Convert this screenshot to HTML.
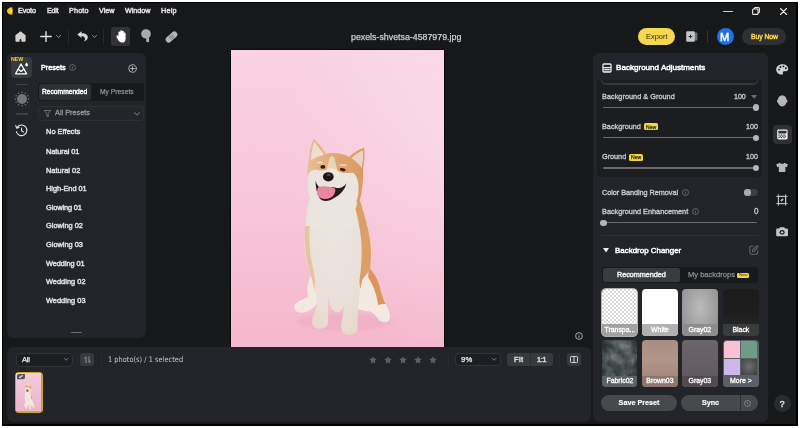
<!DOCTYPE html>
<html lang="en">
<head>
<meta charset="utf-8">
<title>Evoto</title>
<style>
*{box-sizing:border-box;margin:0;padding:0}
html,body{width:800px;height:428px;overflow:hidden;background:#fff}
body{font-family:"Liberation Sans",sans-serif;color:#e4e5e7;position:relative;-webkit-font-smoothing:antialiased}
.abs,.t,.tb{position:absolute}
.t,.tb{will-change:transform;white-space:nowrap;line-height:12px;height:12px;font-size:7.6px;color:#dcdde0}
.tb{-webkit-text-stroke:0.5px currentColor}
.win{position:absolute;left:2px;top:2px;width:796px;height:423.5px;background:#17181a;border:1px solid #000;border-right-width:2px;border-bottom-width:2px}
.panel{position:absolute;background:#232429;border-radius:6px}
svg{position:absolute;overflow:visible}
</style>
</head>
<body>
<div class="win"></div>

<!-- ===== menu bar ===== -->
<svg style="left:7px;top:7px" width="6" height="8" viewBox="0 0 6 8"><path d="M5.4 0.2 C2 0.2 0 2 0 4 C0 6 2 7.8 5.4 7.8 Z" fill="#f6c21a"/><path d="M5.4 2.2 C4 2.6 3.4 3.2 3.4 4 C3.4 4.8 4 5.4 5.4 5.8 Z" fill="#fde68a"/></svg>
<div class="tb" id="m1" style="transform:scaleY(1.12);left:18px;top:5.2px;font-size:7.2px;letter-spacing:-0.1px">Evoto</div>
<div class="tb" id="m2" style="transform:scaleY(1.12);left:47px;top:5.2px;font-size:7.2px;letter-spacing:-0.3px">Edit</div>
<div class="tb" id="m3" style="transform:scaleY(1.12);left:69px;top:5.2px;font-size:7.2px;letter-spacing:0.18px">Photo</div>
<div class="tb" id="m4" style="transform:scaleY(1.12);left:99px;top:5.2px;font-size:7.2px;letter-spacing:0.02px">View</div>
<div class="tb" id="m5" style="transform:scaleY(1.12);left:125px;top:5.2px;font-size:7.2px;letter-spacing:-0.02px">Window</div>
<div class="tb" id="m6" style="transform:scaleY(1.12);left:161px;top:5.2px;font-size:7.2px;letter-spacing:0.23px">Help</div>

<!-- window controls -->
<div class="abs" style="left:723px;top:10.5px;width:10px;height:1.1px;background:#c9c9ca"></div>
<svg style="left:752px;top:7px" width="8" height="8" viewBox="0 0 8 8" fill="none" stroke="#e8e8e8" stroke-width="1.1"><rect x="0.6" y="2" width="5.4" height="5.4" rx="1"/><path d="M2.2 2 V1.6 Q2.2 0.6 3.2 0.6 H6.4 Q7.4 0.6 7.4 1.6 V4.8 Q7.4 5.8 6.4 5.8 H6"/></svg>
<svg style="left:780px;top:8px" width="7" height="7" viewBox="0 0 7 7" stroke="#e8e8e8" stroke-width="1.1" stroke-linecap="round"><path d="M0.5 0.5 L6.5 6.5 M6.5 0.5 L0.5 6.5"/></svg>


<!-- ===== toolbar ===== -->
<svg style="left:15px;top:31px" width="11" height="11" viewBox="0 0 11 11"><path d="M5.5 0.2 L10.6 4.2 V9.8 Q10.6 10.8 9.6 10.8 H6.4 V8.9 Q6.4 8.1 5.5 8.1 Q4.6 8.1 4.6 8.9 V10.8 H1.4 Q0.4 10.8 0.4 9.8 V4.2 Z" fill="#d2d2d3"/></svg>
<svg style="left:40px;top:31px" width="12" height="11" viewBox="0 0 12 11" stroke="#e2e2e3" stroke-width="1.4" stroke-linecap="round"><path d="M6 0.6 V10.4 M0.8 5.5 H11.2"/></svg>
<svg style="left:55.5px;top:35px" width="5" height="3" viewBox="0 0 5 3" fill="none" stroke="#9b9c9e" stroke-width="0.9" stroke-linecap="round" stroke-linejoin="round"><path d="M0.5 0.5 L2.5 2.4 L4.5 0.5"/></svg>
<div class="abs" style="left:68px;top:29px;width:1px;height:15px;background:#27292b"></div>
<svg style="left:76.5px;top:31px" width="11" height="11" viewBox="0 0 11 11"><path d="M4.6 0.3 L0.3 3.6 L4.6 6.9 V4.9 C6.6 4.9 8 6 8 8 C8 9 7.6 9.8 7 10.5 C9.4 9.9 10.8 8.2 10.8 6.3 C10.8 3.8 8.4 2.3 4.6 2.3 Z" fill="#d8d8d9"/></svg>
<svg style="left:92px;top:35px" width="5" height="3" viewBox="0 0 5 3" fill="none" stroke="#9b9c9e" stroke-width="0.9" stroke-linecap="round" stroke-linejoin="round"><path d="M0.5 0.5 L2.5 2.4 L4.5 0.5"/></svg>
<div class="abs" style="left:103px;top:29px;width:1px;height:15px;background:#27292b"></div>
<div class="abs" style="left:111px;top:27px;width:18.5px;height:19px;background:#303235;border-radius:2px"></div>
<svg style="left:115.6px;top:30.2px" width="10.3" height="12.8" viewBox="0 0 10.3 12.8"><path d="M2.4 7 V2.6 Q2.4 1.6 3.3 1.6 Q4.2 1.6 4.2 2.6 V1.2 Q4.2 0.2 5.1 0.2 Q6 0.2 6 1.2 V1.8 Q6 0.8 6.9 0.8 Q7.8 0.8 7.8 1.8 V3.2 Q7.8 2.4 8.7 2.4 Q9.6 2.4 9.6 3.4 V8.4 Q9.6 12.6 5.8 12.6 Q3.6 12.6 2.4 10.6 L0.5 7 Q0 6 0.8 5.5 Q1.6 5.1 2.1 5.9 Z" fill="#fff"/></svg>
<svg style="left:140.8px;top:29.1px" width="10" height="13.5" viewBox="0 0 10 13.5"><path d="M5 0.2 C8 0.2 9.8 2.3 9.8 4.8 C9.8 6.6 9.2 8 8 8.6 L8.2 11.4 Q8.3 13.3 6.7 13.3 Q5.1 13.3 5.2 11.4 L5.3 9.6 C4.6 9.6 4.2 9.2 3.8 9.2 C3 9.4 2.2 9 1.8 8.2 C0.7 7.4 0.2 6.2 0.2 4.8 C0.2 2.3 2 0.2 5 0.2 Z" fill="#a9aaab"/></svg>
<svg style="left:165px;top:30.5px" width="13" height="12" viewBox="0 0 13 12"><g transform="rotate(-42 6.5 6)"><rect x="-0.3" y="3" width="13.6" height="6" rx="3" fill="#b4b5b6"/><rect x="4.3" y="3.8" width="4.4" height="4.4" rx="0.6" fill="#8d8e90"/><circle cx="5.6" cy="5.1" r="0.45" fill="#c8c8c9"/><circle cx="7.4" cy="5.1" r="0.45" fill="#c8c8c9"/><circle cx="5.6" cy="6.9" r="0.45" fill="#c8c8c9"/><circle cx="7.4" cy="6.9" r="0.45" fill="#c8c8c9"/></g></svg>

<div class="t" id="title" style="left:350.6px;top:31.4px;-webkit-text-stroke:0.25px #c8c9cb;color:#d4d5d7;font-size:8.8px;letter-spacing:0.01px">pexels-shvetsa-4587979.jpg</div>

<!-- right toolbar -->
<div class="abs" style="left:637.5px;top:28px;width:37.5px;height:17px;border-radius:9px;background:#f6d84c"></div>
<div class="t" id="export" style="left:646px;top:30.5px;color:#2a2a22;font-size:7.4px;letter-spacing:0.03px">Export</div>
<svg style="left:686px;top:31px" width="12" height="11" viewBox="0 0 12 11"><path d="M8 1.5 H10.6 Q11.4 1.5 11.4 2.3 V8.7 Q11.4 9.5 10.6 9.5 H8 Z" fill="#6f7072"/><rect x="0.2" y="0.2" width="8.6" height="10.6" rx="1" fill="#c4c5c6"/><path d="M4.5 3.6 V7.4 M2.6 5.5 H6.4" stroke="#2a2b2d" stroke-width="1"/></svg>
<div class="abs" style="left:707px;top:30px;width:1px;height:13px;background:#303234"></div>
<div class="abs" style="left:716.5px;top:28.3px;width:17px;height:17px;border-radius:50%;background:#2170e8"></div>
<div class="tb" id="avatar" style="left:720.3px;top:30.7px;font-size:11px;color:#fff">M</div>
<div class="abs" style="left:741.5px;top:28px;width:44.5px;height:17px;border-radius:9px;background:#2d2f32"></div>
<div class="tb" id="buy" style="left:750.5px;top:30.5px;color:#f1cf48;font-size:6.8px;letter-spacing:-0.03px">Buy Now</div>


<!-- ===== left panel ===== -->
<div class="panel" style="left:6.5px;top:53px;width:139.5px;height:285px"></div>
<div class="abs" style="left:10.7px;top:57px;width:21.3px;height:21.4px;background:#38393c;border-radius:4px"></div>
<div class="tb" id="new0" style="left:10.5px;top:53.2px;color:#f2d230;font-weight:bold;-webkit-text-stroke:0;font-size:5.3px;letter-spacing:-0.03px">NEW</div>
<svg style="left:15px;top:61.5px" width="14" height="13" viewBox="0 0 14 13" fill="none" stroke="#fff" stroke-width="1.3" stroke-linejoin="round" stroke-linecap="round"><path d="M6 2 L11.6 11.8 H0.6 Z"/><path d="M3.3 7.2 L6 9.4 L8.8 7.2"/><path d="M11.6 0.6 C12.4 1.6 13 2.4 13 3.1 A1.4 1.4 0 0 1 10.2 3.1 C10.2 2.4 10.8 1.6 11.6 0.6 Z" fill="#fff" stroke="none"/></svg>
<div class="abs" style="left:16px;top:83.5px;width:11.5px;height:1.3px;background:#3d3f42"></div>
<svg style="left:13.6px;top:90.6px" width="16" height="16" viewBox="-8 -8 16 16"><circle r="5.1" fill="#727477"/><g fill="#727477"><circle cx="0" cy="-6.7" r="0.75"/><circle cx="3.35" cy="-5.8" r="0.75"/><circle cx="5.8" cy="-3.35" r="0.75"/><circle cx="6.7" cy="0" r="0.75"/><circle cx="5.8" cy="3.35" r="0.75"/><circle cx="3.35" cy="5.8" r="0.75"/><circle cx="0" cy="6.7" r="0.75"/><circle cx="-3.35" cy="5.8" r="0.75"/><circle cx="-5.8" cy="3.35" r="0.75"/><circle cx="-6.7" cy="0" r="0.75"/><circle cx="-5.8" cy="-3.35" r="0.75"/><circle cx="-3.35" cy="-5.8" r="0.75"/></g></svg>
<div class="abs" style="left:16px;top:113.4px;width:11.5px;height:1.3px;background:#3d3f42"></div>
<svg style="left:15px;top:124px" width="13" height="13" viewBox="0 0 13 13" fill="none" stroke="#e6e6e7" stroke-width="1.1" stroke-linecap="round" stroke-linejoin="round"><path d="M2.1 3.4 A5.3 5.3 0 1 1 1.4 7.6"/><path d="M0.8 1.6 L1.6 4.1 L4.1 3.5"/><path d="M6.6 4 V6.8 L8.6 7.9"/></svg>

<div class="tb" id="presets" style="left:41.3px;top:61.8px;color:#fff;-webkit-text-stroke:0.45px #fff;font-size:7.3px;letter-spacing:-0.01px">Presets</div>
<svg style="left:68.7px;top:64.3px" width="7" height="7" viewBox="0 0 7 7" fill="none" stroke="#7c7e81" stroke-width="0.7"><circle cx="3.5" cy="3.5" r="3"/><path d="M3.5 3.2 V5.2 M3.5 1.8 V2.4"/></svg>
<svg style="left:127.5px;top:63.5px" width="9" height="9" viewBox="0 0 9 9" fill="none" stroke="#cfd0d2" stroke-width="0.8" stroke-linecap="round"><circle cx="4.5" cy="4.5" r="3.8"/><path d="M4.5 2.6 V6.4 M2.6 4.5 H6.4"/></svg>

<div class="abs" style="left:38px;top:83.3px;width:106px;height:17.4px;background:#18191b;border-radius:3px"></div>
<div class="abs" style="left:39px;top:84.3px;width:51.5px;height:15.4px;background:#2e3033;border-radius:2.5px"></div>
<div class="tb" id="rec1" style="left:42px;top:86px;color:#fff;-webkit-text-stroke:0.4px #fff;font-size:6.7px;letter-spacing:-0.01px">Recommended</div>
<div class="tb" id="myp" style="left:100.3px;top:86px;color:#8b8d90;-webkit-text-stroke:0.25px #8b8d90;font-size:6.7px;letter-spacing:0.03px">My Presets</div>

<div class="abs" style="left:38px;top:105.5px;width:106px;height:15.3px;border:1px solid #2d2f32;border-radius:3px;background:#232528"></div>
<svg style="left:44.3px;top:109.5px" width="7" height="7.5" viewBox="0 0 7 7.5" fill="none" stroke="#808285" stroke-width="0.8" stroke-linejoin="round"><path d="M0.5 0.5 H6.5 L4.2 3.6 V6.9 L2.8 6 V3.6 Z"/></svg>
<div class="tb" id="allp" style="left:55px;top:107.2px;color:#94969a;-webkit-text-stroke:0.3px #94969a;font-size:7.3px;letter-spacing:0.01px">All Presets</div>
<svg style="left:134px;top:111.5px" width="6" height="4" viewBox="0 0 6 4" fill="none" stroke="#8b8d90" stroke-width="0.9" stroke-linecap="round" stroke-linejoin="round"><path d="M0.6 0.6 L3 3.2 L5.4 0.6"/></svg>
<div class="tb" id="li0" style="transform:scaleY(1.08);left:46px;top:125.5px;color:#d9dadc;font-size:7.4px;letter-spacing:0.04px">No Effects</div>
<div class="tb" id="li1" style="transform:scaleY(1.08);left:46px;top:146.0px;color:#d9dadc;font-size:7.4px;letter-spacing:-0.07px">Natural 01</div>
<div class="tb" id="li2" style="transform:scaleY(1.08);left:46px;top:164.5px;color:#d9dadc;font-size:7.4px;letter-spacing:0.02px">Natural 02</div>
<div class="tb" id="li3" style="transform:scaleY(1.08);left:46px;top:183.3px;color:#d9dadc;font-size:7.4px;letter-spacing:-0.04px">High-End 01</div>
<div class="tb" id="li4" style="transform:scaleY(1.08);left:46px;top:201.7px;color:#d9dadc;font-size:7.4px;letter-spacing:-0.11px">Glowing 01</div>
<div class="tb" id="li5" style="transform:scaleY(1.08);left:46px;top:220.4px;color:#d9dadc;font-size:7.4px;letter-spacing:0.0px">Glowing 02</div>
<div class="tb" id="li6" style="transform:scaleY(1.08);left:46px;top:239.0px;color:#d9dadc;font-size:7.4px;letter-spacing:0.0px">Glowing 03</div>
<div class="tb" id="li7" style="transform:scaleY(1.08);left:46px;top:257.6px;color:#d9dadc;font-size:7.4px;letter-spacing:-0.07px">Wedding 01</div>
<div class="tb" id="li8" style="transform:scaleY(1.08);left:46px;top:276.2px;color:#d9dadc;font-size:7.4px;letter-spacing:0.02px">Wedding 02</div>
<div class="tb" id="li9" style="transform:scaleY(1.08);left:46px;top:294.6px;color:#d9dadc;font-size:7.4px;letter-spacing:0.02px">Wedding 03</div>

<div class="abs" style="left:71px;top:332px;width:10.5px;height:1.3px;background:#6d6f72;border-radius:1px"></div>


<!-- ===== canvas photo ===== -->
<div class="abs" style="left:230.3px;top:49.3px;width:214.4px;height:299px;background:#0a0a0b"></div>
<svg style="left:231px;top:50px" width="213" height="297.5" viewBox="231 50 213 297.5">
<defs>
<linearGradient id="pk" x1="0" y1="0" x2="0" y2="1"><stop offset="0" stop-color="#f9d2e2"/><stop offset="0.5" stop-color="#f8c6da"/><stop offset="1" stop-color="#f5b8cd"/></linearGradient>
<radialGradient id="pk2" cx="1" cy="0.3" r="0.75"><stop offset="0" stop-color="#fff" stop-opacity="0.24"/><stop offset="1" stop-color="#fff" stop-opacity="0"/></radialGradient>
<linearGradient id="bodyg" x1="0" y1="0" x2="1" y2="0"><stop offset="0" stop-color="#e9c7a3"/><stop offset="0.55" stop-color="#e0a46c"/><stop offset="1" stop-color="#d98f52"/></linearGradient>
<radialGradient id="chestg" cx="0.45" cy="0.3" r="0.8"><stop offset="0" stop-color="#ebe5df"/><stop offset="0.6" stop-color="#e9e1d9"/><stop offset="1" stop-color="#e7d7c7"/></radialGradient>
<filter id="bl" x="-10%" y="-10%" width="120%" height="120%"><feGaussianBlur stdDeviation="0.7"/></filter>
<filter id="bl2" x="-20%" y="-20%" width="140%" height="140%"><feGaussianBlur stdDeviation="1.6"/></filter>
<clipPath id="cp"><rect x="231" y="50" width="213" height="297.5"/></clipPath>
<linearGradient id="headg" x1="0" y1="0" x2="1" y2="0"><stop offset="0" stop-color="#e8c094"/><stop offset="0.45" stop-color="#e0a875"/><stop offset="1" stop-color="#da9a62"/></linearGradient>
</defs>
<rect x="231" y="50" width="213" height="297.5" fill="url(#pk)"/>
<rect x="231" y="50" width="213" height="297.5" fill="url(#pk2)"/>
<g clip-path="url(#cp)">
<!-- floor shadow -->
<ellipse cx="345" cy="322" rx="48" ry="9" fill="#e9a0bb" opacity="0.35" filter="url(#bl2)"/>
<g filter="url(#bl)">
<!-- haunch / back -->
<path d="M362 262 C368 266 374 274 378 286 C381 294 384 300 386 305 C389 310 391 316 389.5 320 C387 323.5 381 323 378 319 C375 314 372 311 366 311 L352 308 L352 270 Z" fill="#f3ebe3"/>
<path d="M369 268 C375 273 379 282 381 292 C382.5 297 384 301 385.5 304 C383 304 380 304 378 305 C377 296 374 286 368 277 Z" fill="#dc955a"/>
<!-- left hind paw & hip fluff -->
<path d="M311 276 C307 282 306.5 290 308.5 297 C303 299 296 302 294.3 306 C293.5 310.5 298 313.3 303 312.6 C309 311.6 314 308 317 304 L319 280 Z" fill="#f2e9e0"/>
<!-- torso -->
<path d="M309 200 C306.5 210 305 225 304.5 240 C304 252 306 262 309.5 271 C313 279 316 289 317 299 C317.3 307 314.5 313 312.5 318.5 C311.3 324 313 328 318 328.7 C323 329 327.5 327.5 328 323 C328.5 315 328 305 328.5 296 C329 302 330 308 334 311.5 C338 313.5 342 312 343.5 306 C344 312 342.5 318 341.5 323 C340.5 329 342 334 348 334.8 C353.5 335.2 357.5 333 357.5 328 C357.5 320 358 312 358.6 305 C359 296 360 286 362 278 C365 274 368 272 369.5 270 C371.5 262 371.5 250 370.5 241 C369 231 366.5 221 364 212 C362.5 206 361 200 359 194 Z" fill="url(#chestg)"/>
<!-- head -->
<path d="M313.6 138.8 C311 145 309.3 151 309.2 157 C308 163 307 171 307.2 179 C307.5 188 308.8 196 310 201 C314 208 322 212 332 212 C344 212 354 208 360 200 C362 192 363.5 180 363.2 168 C364.4 161 364.9 154 364.2 147.8 C359 149.6 353 152.6 349 157 C343 153 333 152 325.5 153.8 C322.5 148 318 142.5 313.6 138.8 Z" fill="url(#headg)"/>
<!-- ears inner -->
<path d="M314.2 142 C312.2 148 311 154 311 160 C314.5 158 320 155.8 324 154.8 C321 150 317.7 145.8 314.2 142 Z" fill="#f1ddd0"/>
<path d="M363 150.3 C358.5 152 354.2 155 351.5 158.5 C355.2 160.5 359 164 361.5 168 C363 162 363.5 156 363 150.3 Z" fill="#ecd3c6"/>
<!-- white face + neck -->
<path d="M307.6 176 C309 172 312 169.8 316 169.6 C320 170.8 324 171 326.5 169.5 C328 167.5 329.5 166 331.5 166 C333.5 166 335.5 168 338 171 C342 173.5 348 173.5 352.5 172.5 C355.5 174 357.5 178 358.2 183 C359 190 358.5 196 356.5 201 C357.5 208 358 216 356 226 C345 234 320 234 309 226 C307.5 218 308.5 208 310 201 C308 193 307 184 307.6 176 Z" fill="#ebe5df"/>
<path d="M327 169 C327.8 165 328.6 160.5 330 157 C331.5 155.8 333.5 156 334.5 158 C335.3 162 336.3 166.5 337.6 170.5 C334 168 330.5 167.5 327 169 Z" fill="#ecd3b6"/>
<path d="M316 163.2 C318 161.5 321.5 161.3 324 162.6 C322 163.4 318.5 163.8 316 163.2 Z" fill="#f0dcc4"/>
<path d="M338.5 165.3 C341 163.6 345 163.8 347.5 165.6 C345 166 341 166 338.5 165.3 Z" fill="#f0dcc4"/>
<!-- tan on right shoulder -->
<path d="M359 197 C362 206 365.5 218 368.2 230 C371 242 372 256 369.8 270 C367 274 364 277 362.3 280 C361.5 283 361 286 360.6 289 C359.6 286 359.3 283 359.6 279 C361 270 362 258 361.5 244 C360.5 230 358 218 355.5 209 Z" fill="#dd9f68"/>
<path d="M305 226 C304 242 305 256 309.5 271 C311.5 277 313.5 284 314.5 292 C315.5 284 315 276 313 268 C310 256 309 242 309.5 226 Z" fill="#e6ba8c" opacity="0.75"/>
<!-- eyes -->
<ellipse cx="322.8" cy="166.9" rx="2.5" ry="1.9" fill="#2a1c14" transform="rotate(-5 322.8 166.9)"/>
<ellipse cx="342.7" cy="169.7" rx="3" ry="1.5" fill="#2a1c14" transform="rotate(12 342.7 169.7)"/>
<!-- nose -->
<ellipse cx="328.3" cy="176.8" rx="5.4" ry="4.6" fill="#1d1512"/><ellipse cx="328.6" cy="175" rx="2.2" ry="0.9" fill="#6b6360" opacity="0.7"/>
<!-- mouth -->
<path d="M315.5 180.5 C317 186 320 189 325 187.5 C329 186.5 333 187 337 188 C341 188.5 345 186 346.5 183 C345 190 340 195 334 198 C329 202 322 202 319.5 198 C316.5 193 315.5 186 315.5 180.5 Z" fill="#2b1a17"/>
<path d="M318.5 187 C322 185.5 330 186 335 188.5 C336 192 334 196 330 198 C325 200 319.5 199 317.5 195 C316.5 192 317 189 318.5 187 Z" fill="#e8879d"/>
</g>
</g>
</svg>


<!-- ===== info icon on canvas ===== -->
<svg style="left:575px;top:332.3px" width="8" height="8" viewBox="0 0 8 8" fill="none" stroke="#c9cacc" stroke-width="0.8"><circle cx="4" cy="4" r="3.4"/><path d="M4 3.6 V5.8 M4 2.1 V2.8"/></svg>

<!-- ===== bottom panel ===== -->
<div class="panel" style="left:6.5px;top:347px;width:584px;height:74.5px"></div>
<div class="abs" style="left:16px;top:352.5px;width:56.5px;height:14px;border:1px solid #313337;border-radius:4px;background:#1d1e21"></div>
<div class="tb" id="all" style="left:22px;top:353.6px;color:#f0f0f1;letter-spacing:-0.3px;font-size:7.6px;-webkit-text-stroke:0.25px #f0f0f1">All</div>
<svg style="left:63.7px;top:358.2px" width="4.4" height="2.8" viewBox="0 0 5 3.2" fill="none" stroke="#8d8f92" stroke-width="0.9" stroke-linecap="round" stroke-linejoin="round"><path d="M0.5 0.5 L2.5 2.6 L4.5 0.5"/></svg>
<div class="abs" style="left:80px;top:353px;width:14.2px;height:13.3px;border-radius:3px;background:#37393c"></div>
<svg style="left:83.5px;top:356px" width="7" height="7.4" viewBox="0 0 7 7.4" fill="none" stroke="#b9babc" stroke-width="0.7" stroke-linecap="round" stroke-linejoin="round"><path d="M2 6.6 V0.8 L0.6 2.2"/><path d="M5 0.8 V6.6 L6.4 5.2"/></svg>
<div class="abs" style="left:101px;top:354px;width:1px;height:12px;background:#282a2e"></div>
<div class="t" id="cnt" style="transform:scaleY(1.15);left:108px;top:353.8px;font-family:'DejaVu Sans','Liberation Sans',sans-serif;color:#c6c7c9;font-size:6.6px;letter-spacing:0.03px">1 photo(s) / 1 selected</div>
<svg style="left:368.5px;top:355.6px" width="8" height="8" viewBox="0 0 8 8"><path d="M4 0.2 L5.18 2.6 L7.8 2.98 L5.9 4.84 L6.35 7.46 L4 6.22 L1.65 7.46 L2.1 4.84 L0.2 2.98 L2.82 2.6 Z" fill="#5d5f62"/></svg>
<svg style="left:383.8px;top:355.6px" width="8" height="8" viewBox="0 0 8 8"><path d="M4 0.2 L5.18 2.6 L7.8 2.98 L5.9 4.84 L6.35 7.46 L4 6.22 L1.65 7.46 L2.1 4.84 L0.2 2.98 L2.82 2.6 Z" fill="#5d5f62"/></svg>
<svg style="left:399.0px;top:355.6px" width="8" height="8" viewBox="0 0 8 8"><path d="M4 0.2 L5.18 2.6 L7.8 2.98 L5.9 4.84 L6.35 7.46 L4 6.22 L1.65 7.46 L2.1 4.84 L0.2 2.98 L2.82 2.6 Z" fill="#5d5f62"/></svg>
<svg style="left:414.0px;top:355.6px" width="8" height="8" viewBox="0 0 8 8"><path d="M4 0.2 L5.18 2.6 L7.8 2.98 L5.9 4.84 L6.35 7.46 L4 6.22 L1.65 7.46 L2.1 4.84 L0.2 2.98 L2.82 2.6 Z" fill="#5d5f62"/></svg>
<svg style="left:429.0px;top:355.6px" width="8" height="8" viewBox="0 0 8 8"><path d="M4 0.2 L5.18 2.6 L7.8 2.98 L5.9 4.84 L6.35 7.46 L4 6.22 L1.65 7.46 L2.1 4.84 L0.2 2.98 L2.82 2.6 Z" fill="#5d5f62"/></svg>

<div class="abs" style="left:448px;top:354px;width:1px;height:12px;background:#282a2e"></div>
<div class="abs" style="left:455.3px;top:352.7px;width:45.4px;height:13.7px;border:1px solid #313337;border-radius:4px;background:#1d1e21"></div>
<div class="tb" id="zoom" style="left:461px;top:353.6px;color:#f0f0f1;letter-spacing:0.2px;font-size:7.6px;-webkit-text-stroke:0.25px #f0f0f1">9%</div>
<svg style="left:491.7px;top:358.2px" width="4.4" height="2.8" viewBox="0 0 5 3.2" fill="none" stroke="#8d8f92" stroke-width="0.9" stroke-linecap="round" stroke-linejoin="round"><path d="M0.5 0.5 L2.5 2.6 L4.5 0.5"/></svg>
<div class="abs" style="left:507px;top:353px;width:45.5px;height:13.3px;border-radius:3px;background:#37393c"></div>
<div class="abs" style="left:529.7px;top:353px;width:1px;height:13.3px;background:#2a2c2f"></div>
<div class="tb" id="fit" style=";top:353.7px;color:#d6d7d9;letter-spacing:0.35px;font-size:7.6px;left:513.9px">Fit</div>
<div class="tb" id="oneone" style=";top:353.7px;color:#d6d7d9;letter-spacing:-0.3px;font-size:7.2px;left:537px">1:1</div>
<div class="abs" style="left:559px;top:354px;width:1px;height:12px;background:#282a2e"></div>
<div class="abs" style="left:566.5px;top:353px;width:14.2px;height:13.3px;border-radius:3px;background:#37393c"></div>
<svg style="left:569.7px;top:356.2px" width="8" height="7" viewBox="0 0 8 7" fill="none" stroke="#e0e1e3" stroke-width="0.9" stroke-linejoin="round"><rect x="0.5" y="0.5" width="7" height="6" rx="0.8"/><path d="M4 0.5 V6.5"/></svg>

<!-- thumbnail -->
<div class="abs" style="left:15px;top:372px;width:27.6px;height:40.8px;border-radius:4px;background:#c9a42c"></div>
<svg style="left:16.3px;top:373.3px;border-radius:3px" width="25" height="38.2" viewBox="231 50 213 297.5" preserveAspectRatio="none">
<defs><linearGradient id="pkt" x1="0" y1="0" x2="0" y2="1"><stop offset="0" stop-color="#f4cbdd"/><stop offset="1" stop-color="#eeb3cb"/></linearGradient></defs>
<rect x="231" y="50" width="213" height="297.5" fill="url(#pkt)"/>
<path d="M314 139 L309 165 L308 200 L304 245 L312 280 L296 306 L312 312 L314 329 L328 327 L330 300 L343 306 L342 334 L357 333 L360 300 L378 320 L390 318 L380 285 L371 262 L368 225 L360 198 L364 148 L350 156 L325 153 Z" fill="#efe6df"/>
<path d="M314 139 L309 165 L325 160 L345 165 L358 180 L362 215 L371 262 L360 250 L356 200 L364 148 L350 156 L325 153 Z" fill="#dca06a"/>
<ellipse cx="328" cy="188" rx="11" ry="9" fill="#8a4a4a"/>
</svg>
<svg style="left:16.6px;top:373.6px" width="8" height="5.2" viewBox="0 0 8 5.2"><path d="M0 2 Q0 0 2 0 H8 V3.4 Q8 5.2 6.2 5.2 H0 Z" fill="#4a4c4f" opacity="0.92"/><path d="M1.9 4 L2.2 3.1 L5.2 1 L6 1.8 L3 3.9 Z" fill="#e6e6e6"/></svg>


<!-- ===== right panel ===== -->
<div class="panel" style="left:592.6px;top:53px;width:175.4px;height:368.5px"></div>
<svg style="left:601.5px;top:62.6px" width="10" height="10" viewBox="0 0 10 10"><rect x="0.3" y="0.3" width="9.4" height="9.4" rx="1.6" fill="#e9e9ea"/><rect x="1.6" y="1.7" width="6.8" height="2.4" rx="0.5" fill="#232429"/><g fill="#232429"><rect x="1.6" y="5" width="1.2" height="1.2"/><rect x="3.5" y="5" width="1.2" height="1.2"/><rect x="5.4" y="5" width="1.2" height="1.2"/><rect x="7.2" y="5" width="1.2" height="1.2"/><rect x="1.6" y="7" width="1.2" height="1.2"/><rect x="3.5" y="7" width="1.2" height="1.2"/><rect x="5.4" y="7" width="1.2" height="1.2"/><rect x="7.2" y="7" width="1.2" height="1.2"/></g></svg>
<div class="tb" id="bgadj" style="left:616px;top:62.0px;color:#fff;-webkit-text-stroke:0.45px #fff;font-size:8.1px;letter-spacing:-0.01px">Background Adjustments</div>

<!-- dark card -->
<div class="abs" style="left:597px;top:79.5px;width:164.7px;height:97.3px;background:#1c1d20;border-radius:0 0 5px 5px"></div>
<div class="abs" style="left:600.8px;top:76px;width:157.6px;height:9px;border:1.4px solid #34363a;border-bottom-width:2.4px;border-top:none;border-radius:0 0 5px 5px;background:#1c1d20"></div>
<div class="abs" style="left:597px;top:74px;width:165px;height:5.5px;background:#232429"></div>

<div class="t" id="bgg" style="transform:scaleY(1.07);left:601.8px;top:91.2px;color:#c8c9cc;-webkit-text-stroke:0.32px #c8c9cc;font-size:7.3px;letter-spacing:0.03px">Background &amp; Ground</div>
<div class="t" id="v1" style="transform:scaleY(1.07);left:733.8px;top:91.2px;color:#c8c9cc;-webkit-text-stroke:0.32px #c8c9cc;font-size:7.1px;letter-spacing:-0.07px">100</div>
<svg style="left:750.6px;top:94.6px" width="6.2" height="3.8" viewBox="0 0 6.2 3.8"><path d="M0 0 H6.2 L3.1 3.8 Z" fill="#6c6e71"/></svg>
<div class="abs" style="left:603px;top:106.8px;width:154px;height:1.5px;background:#6b6d70;border-radius:1px"></div>
<div class="abs" style="left:752.8px;top:104.4px;width:6.4px;height:6.4px;border-radius:50%;background:#b4b6b9"></div>

<div class="t" id="bg" style="transform:scaleY(1.07);left:601.8px;top:121.3px;color:#c8c9cc;-webkit-text-stroke:0.32px #c8c9cc;font-size:7.3px;letter-spacing:-0.01px">Background</div>
<div class="abs" style="left:643.6px;top:123.3px;width:14.6px;height:7.2px;border-radius:1.5px;background:#f4d641"></div><div class="t" id="nb1" style="left:645.8px;top:121.2px;color:#3a3410;font-size:5.1px;letter-spacing:-0.0px;-webkit-text-stroke:0.25px #3a3410">New</div>

<div class="t" id="v2" style="transform:scaleY(1.07);left:746px;top:121.3px;color:#c8c9cc;-webkit-text-stroke:0.32px #c8c9cc;font-size:7.1px;letter-spacing:0.08px">100</div>
<div class="abs" style="left:603px;top:136.9px;width:154px;height:1.5px;background:#6b6d70;border-radius:1px"></div>
<div class="abs" style="left:752.8px;top:134.5px;width:6.4px;height:6.4px;border-radius:50%;background:#b4b6b9"></div>

<div class="t" id="gr" style="transform:scaleY(1.07);left:601.8px;top:151.3px;color:#c8c9cc;-webkit-text-stroke:0.32px #c8c9cc;font-size:7.3px;letter-spacing:-0.03px">Ground</div>
<div class="abs" style="left:628.5px;top:153.5px;width:14.6px;height:7.2px;border-radius:1.5px;background:#f4d641"></div><div class="t" id="nb2" style="left:630.7px;top:151.3px;color:#3a3410;font-size:5.1px;letter-spacing:0.05px;-webkit-text-stroke:0.25px #3a3410">New</div>

<div class="t" id="v3" style="transform:scaleY(1.07);left:746px;top:151.3px;color:#c8c9cc;-webkit-text-stroke:0.32px #c8c9cc;font-size:7.1px;letter-spacing:0.08px">100</div>
<div class="abs" style="left:603px;top:167.1px;width:154px;height:1.5px;background:#6b6d70;border-radius:1px"></div>
<div class="abs" style="left:752.8px;top:164.6px;width:6.4px;height:6.4px;border-radius:50%;background:#b4b6b9"></div>

<div class="t" id="cbr" style="transform:scaleY(1.07);left:601.8px;top:186.9px;color:#c8c9cc;-webkit-text-stroke:0.32px #c8c9cc;font-size:7.3px;letter-spacing:-0.05px">Color Banding Removal</div>
<svg style="left:681.8px;top:188.9px" width="7" height="7" viewBox="0 0 7 7" fill="none" stroke="#7c7e81" stroke-width="0.7"><circle cx="3.5" cy="3.5" r="3"/><path d="M3.5 3.2 V5.2 M3.5 1.8 V2.4"/></svg>

<div class="abs" style="left:743.5px;top:188.7px;width:14.8px;height:7.6px;border-radius:4px;background:#3b3d40"></div>
<div class="abs" style="left:744.2px;top:189.3px;width:6.4px;height:6.4px;border-radius:50%;background:#a9abae"></div>
<div class="t" id="bge" style="transform:scaleY(1.07);left:601.8px;top:205.8px;color:#c8c9cc;-webkit-text-stroke:0.32px #c8c9cc;font-size:7.3px;letter-spacing:0.01px">Background Enhancement</div>
<svg style="left:691.5px;top:208.3px" width="7" height="7" viewBox="0 0 7 7" fill="none" stroke="#7c7e81" stroke-width="0.7"><circle cx="3.5" cy="3.5" r="3"/><path d="M3.5 3.2 V5.2 M3.5 1.8 V2.4"/></svg>

<div class="t" id="v4" style="transform:scaleY(1.07);left:753.5px;top:205.8px;color:#c8c9cc;-webkit-text-stroke:0.32px #c8c9cc;font-size:8.1px;letter-spacing:-0.02px">0</div>
<div class="abs" style="left:603px;top:221.9px;width:154px;height:1.5px;background:#6b6d70;border-radius:1px"></div>
<div class="abs" style="left:600.3px;top:219.5px;width:6.4px;height:6.4px;border-radius:50%;background:#b4b6b9"></div>

<div class="abs" style="left:601px;top:235.2px;width:158px;height:1px;background:#2e3033"></div>

<svg style="left:602.6px;top:248px" width="6" height="4.6" viewBox="0 0 6 4.6"><path d="M0 0 H6 L3 4.6 Z" fill="#f0f0f1"/></svg>
<div class="tb" id="bdc" style="left:614.7px;top:244.5px;color:#fff;-webkit-text-stroke:0.45px #fff;font-size:7.9px;letter-spacing:0.03px">Backdrop Changer</div>
<svg style="left:748.5px;top:245px" width="10" height="10" viewBox="0 0 10 10" fill="none" stroke="#636568" stroke-width="1.1" stroke-linecap="round" stroke-linejoin="round"><path d="M4.2 1.2 H2.4 Q0.8 1.2 0.8 2.8 V7.6 Q0.8 9.2 2.4 9.2 H7.2 Q8.8 9.2 8.8 7.6 V5.8"/><path d="M3.4 6.6 L3.8 4.8 L7.6 1 Q8.2 0.5 8.8 1.1 Q9.4 1.8 8.9 2.4 L5.1 6.2 Z"/></svg>

<div class="abs" style="left:601.8px;top:267px;width:156.5px;height:15.6px;background:#18191b;border-radius:3px"></div>
<div class="abs" style="left:602.8px;top:268px;width:77px;height:13.6px;background:#393b3e;border-radius:2.5px"></div>
<div class="tb" id="rec2" style="left:617.3px;top:268.8px;color:#e8e9eb;font-size:7.2px;letter-spacing:-0.0px">Recommended</div>
<div class="t" id="myb" style="left:688px;top:268.8px;color:#8b8d90;-webkit-text-stroke:0.25px #8b8d90;font-size:7.6px;letter-spacing:-0.03px">My backdrops</div>
<div class="abs" style="left:737.2px;top:272.6px;width:11.8px;height:5px;border-radius:1.2px;background:#f4d641"></div>
<div class="t" id="nb3" style="left:738.8px;top:269.2px;color:#3a3410;font-size:4.3px;letter-spacing:0.05px">New</div>

<!-- ===== backdrop thumbs ===== -->
<div class="abs" style="left:601.6px;top:288.5px;width:35.8px;height:47.0px;border-radius:4px;overflow:hidden;box-shadow:0 0 0 0.8px #dcdcdc;background:repeating-conic-gradient(#d9d9d9 0% 25%, #fff 0% 50%) 0 0/4px 4px"><div class="abs" style="left:0;bottom:0;width:100%;height:11.2px;background:rgba(150,150,150,0.88)"></div><div class="tb" id="th0" style="left:0;width:100%;text-align:center;bottom:-0.3px;font-size:6.9px;color:#fff;-webkit-text-stroke:0.3px #fff">Transpa...</div></div>
<div class="abs" style="left:642.0px;top:288.5px;width:35.8px;height:47.0px;border-radius:4px;overflow:hidden;background:#ffffff"><div class="abs" style="left:0;bottom:0;width:100%;height:11.2px;background:#b1b1b1"></div><div class="tb" id="th1" style="left:0;width:100%;text-align:center;bottom:-0.3px;font-size:6.9px;color:#fff;-webkit-text-stroke:0.3px #fff">White</div></div>
<div class="abs" style="left:682.4px;top:288.5px;width:35.8px;height:47.0px;border-radius:4px;overflow:hidden;background:radial-gradient(ellipse at 50% 40%,#bcbcbc,#8f8f8f 90%)"><div class="abs" style="left:0;bottom:0;width:100%;height:11.2px;background:#8d8d8d"></div><div class="tb" id="th2" style="left:0;width:100%;text-align:center;bottom:-0.3px;font-size:6.9px;color:#fff;-webkit-text-stroke:0.3px #fff">Gray02</div></div>
<div class="abs" style="left:722.8px;top:288.5px;width:35.8px;height:47.0px;border-radius:4px;overflow:hidden;background:linear-gradient(#1b1b1c,#1e1e1f 55%,#2d2d2e)"><div class="abs" style="left:0;bottom:0;width:100%;height:11.2px;background:#3a3b3d"></div><div class="tb" id="th3" style="left:0;width:100%;text-align:center;bottom:-0.3px;font-size:6.9px;color:#fff;-webkit-text-stroke:0.3px #fff">Black</div></div>
<div class="abs" style="left:601.6px;top:340.0px;width:35.8px;height:46.8px;border-radius:4px;overflow:hidden;background:#2c3132"><svg style="left:0;top:0" width="36" height="47" viewBox="0 0 36 47"><defs><filter id="fab" x="0" y="0" width="100%" height="100%"><feTurbulence type="fractalNoise" baseFrequency="0.09" numOctaves="3" seed="7"/><feColorMatrix type="matrix" values="0 0 0 0 0.36  0 0 0 0 0.41  0 0 0 0 0.41  0.9 0.9 0 0 -0.7"/></filter><radialGradient id="fabe" cx="0.5" cy="0.42" r="0.7"><stop offset="0.55" stop-color="#262b2c" stop-opacity="0"/><stop offset="1" stop-color="#262b2c" stop-opacity="0.85"/></radialGradient><radialGradient id="fabv" cx="0.5" cy="0.42" r="0.62"><stop offset="0" stop-color="#4a5354" stop-opacity="0.9"/><stop offset="0.6" stop-color="#3f4748" stop-opacity="0.5"/><stop offset="1" stop-color="#2a2f30" stop-opacity="0"/></radialGradient></defs><rect width="36" height="47" fill="#2c3132"/><rect width="36" height="47" fill="url(#fabv)"/><rect width="36" height="47" filter="url(#fab)"/><rect width="36" height="47" fill="url(#fabe)"/></svg><div class="abs" style="left:0;bottom:0;width:100%;height:10.8px;background:#5c6263"></div><div class="tb" id="th4" style="left:0;width:100%;text-align:center;bottom:-0.3px;font-size:6.9px;color:#fff;-webkit-text-stroke:0.3px #fff">Fabric02</div></div>
<div class="abs" style="left:642.0px;top:340.0px;width:35.8px;height:46.8px;border-radius:4px;overflow:hidden;background:linear-gradient(#a98c81,#b39689 40%,#9d8175)"><div class="abs" style="left:0;bottom:0;width:100%;height:10.8px;background:#8f766c"></div><div class="tb" id="th5" style="left:0;width:100%;text-align:center;bottom:-0.3px;font-size:6.9px;color:#fff;-webkit-text-stroke:0.3px #fff">Brown03</div></div>
<div class="abs" style="left:682.4px;top:340.0px;width:35.8px;height:46.8px;border-radius:4px;overflow:hidden;background:linear-gradient(#6b6569,#645e62 60%,#5a5458)"><div class="abs" style="left:0;bottom:0;width:100%;height:10.8px;background:#514b4f"></div><div class="tb" id="th6" style="left:0;width:100%;text-align:center;bottom:-0.3px;font-size:6.9px;color:#fff;-webkit-text-stroke:0.3px #fff">Gray03</div></div>
<div class="abs" style="left:722.8px;top:340.0px;width:35.8px;height:46.8px;border-radius:4px;overflow:hidden;background:#5b5f68"><div class="abs" style="left:1.2px;top:1.2px;width:16.3px;height:16.6px;background:#f9c1d4;border-radius:3px 0 0 0"></div><div class="abs" style="left:18.3px;top:1.2px;width:16.3px;height:16.6px;background:#6f9c88;border-radius:0 3px 0 0"></div><div class="abs" style="left:1.2px;top:18.6px;width:16.3px;height:16.6px;background:#cbb8e8"></div><div class="abs" style="left:18.3px;top:18.6px;width:16.3px;height:16.6px;background:radial-gradient(circle at 50% 45%,#6e6e6e,#3c3c3c)"></div><div class="abs" style="left:0;bottom:0;width:100%;height:10.8px;background:#5b5f68"></div><div class="tb" id="th7" style="left:0;width:100%;text-align:center;bottom:-0.3px;font-size:6.9px;color:#fff;-webkit-text-stroke:0.3px #fff">More &gt;</div></div>

<!-- buttons -->
<div class="abs" style="left:600.5px;top:394.8px;width:76px;height:16.4px;border-radius:8.2px;background:#47494c"></div>
<div class="tb" id="savep" style="left:600.5px;width:76px;text-align:center;top:397px;font-size:7.2px;color:#fff;-webkit-text-stroke:0.15px #fff;font-weight:bold">Save Preset</div>
<div class="abs" style="left:681px;top:394.8px;width:77.2px;height:16.4px;border-radius:8.2px;background:#47494c"></div>
<div class="abs" style="left:740px;top:394.8px;width:1px;height:16.4px;background:#2c2e31"></div>
<div class="tb" id="sync" style="left:681px;width:59px;text-align:center;top:397px;font-size:7.2px;color:#fff;-webkit-text-stroke:0.15px #fff;font-weight:bold">Sync</div>
<svg style="left:744px;top:399.5px" width="7" height="7" viewBox="0 0 7 7" fill="none" stroke="#9a9c9f" stroke-width="0.7"><circle cx="3.5" cy="3.5" r="3"/><path d="M3.5 2 V3.8 M3.5 4.6 V5.1"/></svg>

<!-- right icon column -->
<svg style="left:776px;top:63.8px" width="12.4" height="11" viewBox="0 0 12.4 11"><path d="M6.4 0.2 C2.6 0.2 0.2 2.6 0.2 5.4 C0.2 8.2 2.6 10.6 5.6 10.6 C7 10.6 7.4 9.8 7 9 C6.5 8 7 7.2 8.2 7.2 H9.8 C11.4 7.2 12.2 6.2 12.2 4.8 C12.2 2.2 9.8 0.2 6.4 0.2 Z" fill="#cfd0d2"/><circle cx="3" cy="5.6" r="0.95" fill="#17181a"/><circle cx="4.4" cy="3" r="0.95" fill="#17181a"/><circle cx="7.4" cy="2.4" r="0.95" fill="#17181a"/><circle cx="9.9" cy="4.2" r="0.95" fill="#17181a"/></svg>
<svg style="left:776.8px;top:95.2px" width="10.4" height="12" viewBox="0 0 10.4 12"><ellipse cx="5.2" cy="5.8" rx="4.5" ry="5.6" fill="#b6b7b9"/><ellipse cx="0.8" cy="6.2" rx="0.8" ry="1.4" fill="#b6b7b9"/><ellipse cx="9.6" cy="6.2" rx="0.8" ry="1.4" fill="#b6b7b9"/><path d="M3.8 9.1 Q5.2 9.9 6.6 9.1" stroke="#8d8e90" stroke-width="0.6" fill="none"/></svg>
<div class="abs" style="left:773px;top:125.4px;width:18.8px;height:18.2px;border-radius:4px;background:#2f3134"></div>
<svg style="left:776.8px;top:129.4px" width="10.8" height="10.8" viewBox="0 0 11 10.6"><rect x="0.2" y="0.2" width="10.6" height="10.2" rx="1.4" fill="#f1f1f2"/><rect x="1.4" y="1.5" width="8.2" height="2.8" rx="0.5" fill="#2f3134"/><g fill="#2f3134"><rect x="1.4" y="5.2" width="1.3" height="1.3"/><rect x="4" y="5.2" width="1.3" height="1.3"/><rect x="6.6" y="5.2" width="1.3" height="1.3"/><rect x="2.7" y="6.5" width="1.3" height="1.3"/><rect x="5.3" y="6.5" width="1.3" height="1.3"/><rect x="7.9" y="6.5" width="1.3" height="1.3"/><rect x="1.4" y="7.8" width="1.3" height="1.3"/><rect x="4" y="7.8" width="1.3" height="1.3"/><rect x="6.6" y="7.8" width="1.3" height="1.3"/></g></svg>
<svg style="left:775.8px;top:161.8px" width="12.2" height="10.6" viewBox="0 0 14 11"><path d="M4.4 0.2 C5.4 2 8.6 2 9.6 0.2 L13.8 2.4 L12.4 5.4 L10.8 4.8 V10 Q10.8 10.8 10 10.8 H4 Q3.2 10.8 3.2 10 V4.8 L1.6 5.4 L0.2 2.4 Z" fill="#b7b8ba"/></svg>
<svg style="left:775.8px;top:193.5px" width="12" height="12" viewBox="0 0 12 12" fill="none" stroke="#bdbec0" stroke-width="1.25"><rect x="2.4" y="2.4" width="7.2" height="7.2"/><path d="M2.4 0.3 V2.4 M0.3 2.4 H2.4 M9.6 0.3 V2.4 M11.7 2.4 H9.6 M2.4 11.7 V9.6 M0.3 9.6 H2.4 M9.6 11.7 V9.6 M11.7 9.6 H9.6" stroke-width="1"/><path d="M4.9 7.1 L7.1 4.9" stroke-width="1.8"/></svg>
<svg style="left:776.2px;top:227.3px" width="12.2" height="9.4" viewBox="0 0 12.4 10.4" preserveAspectRatio="none"><path d="M4 0.2 H8.4 L9.2 1.6 H11.2 Q12.2 1.6 12.2 2.6 V9.2 Q12.2 10.2 11.2 10.2 H1.2 Q0.2 10.2 0.2 9.2 V2.6 Q0.2 1.6 1.2 1.6 H3.2 Z" fill="#c3c4c6"/><circle cx="6.2" cy="5.9" r="2.6" fill="#17181a"/><circle cx="6.2" cy="5.9" r="1.3" fill="#c3c4c6"/></svg>
<div class="abs" style="left:774.2px;top:395.3px;width:16.4px;height:16.4px;border-radius:50%;background:#292b2d"></div>
<div class="tb" id="q" style="left:774.2px;width:16.4px;text-align:center;top:397.6px;font-size:8.6px;color:#e4e5e7;-webkit-text-stroke:0.4px">?</div>

</body>
</html>
